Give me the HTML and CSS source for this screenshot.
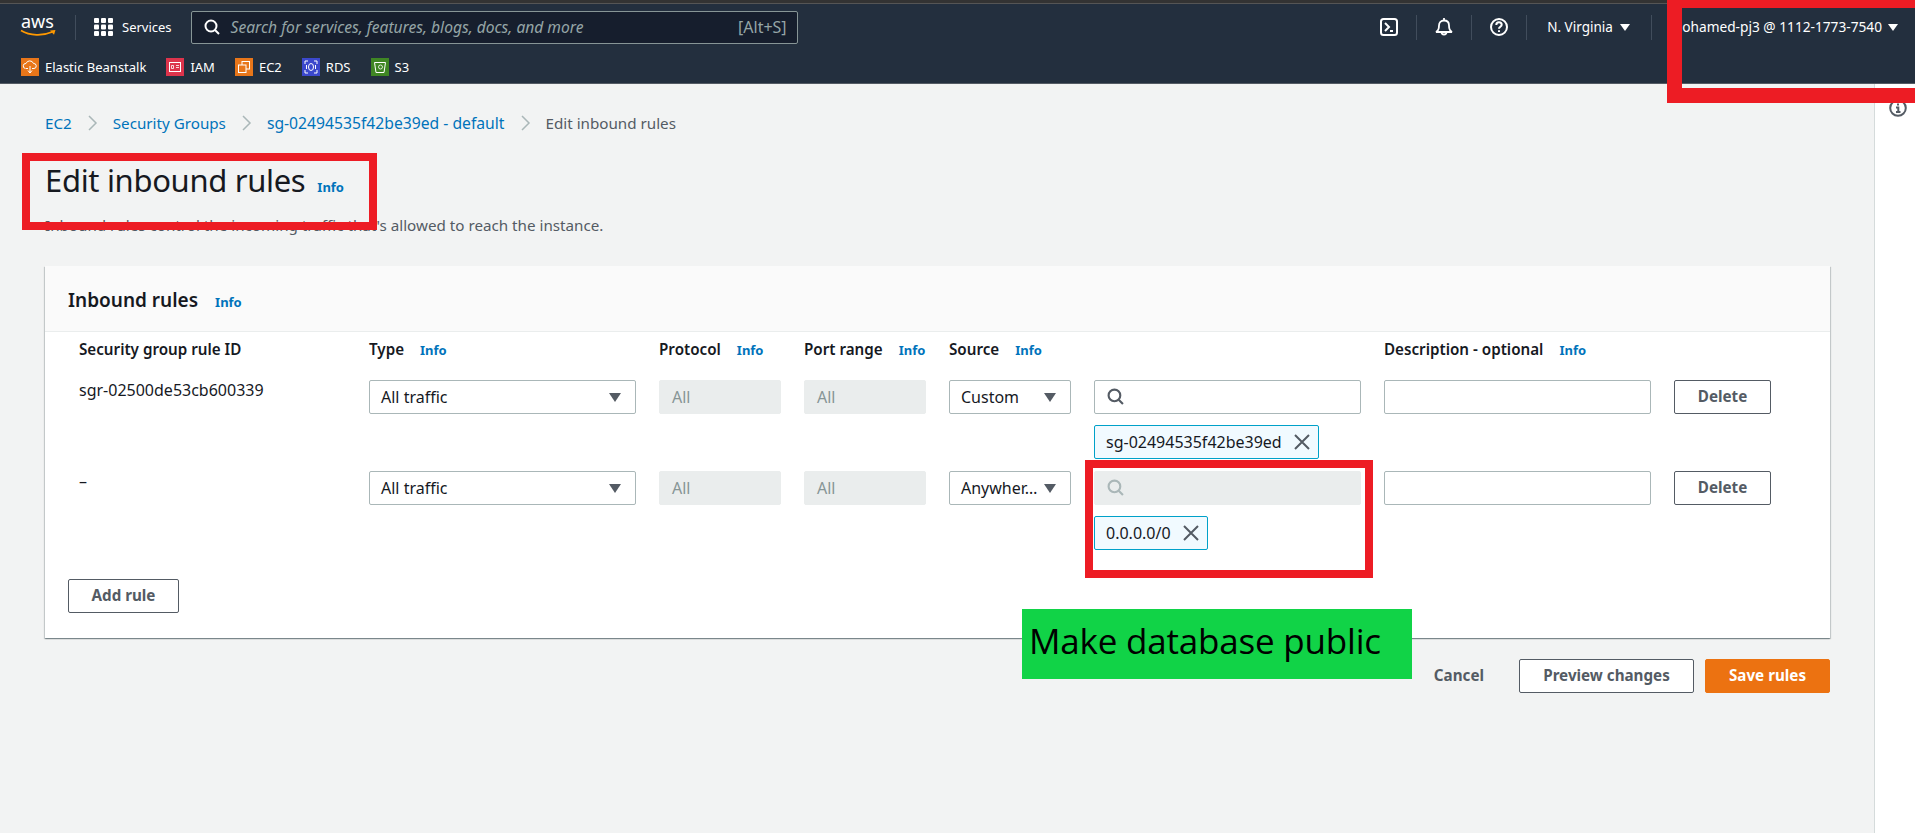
FILE: index.html
```html
<!DOCTYPE html>
<html lang="en">
<head>
	<meta charset="UTF-8">
	<title>Edit inbound rules</title>
	<link rel="stylesheet" href="styles.css">
</head>
<body>
	<div class="strip"></div>
	<header class="nav">
		<div class="nav-top">
			<svg class="aws" viewBox="0 0 36 22"><text x="0" y="11.500" class="aws-txt">aws</text><path d="M0 14.500c9 5.500 22 5.500 31 1.500" fill="none" stroke="#f90" stroke-width="1.800"/><path d="M29 14.500l5.500-.5-1.500 4.800z" fill="#f90"/></svg>
			<span class="sep"></span>
			<svg class="grid-ico" viewBox="0 0 19 18" fill="#fff"><rect x="0" width="5" height="5" rx="1"/><rect x="7" width="5" height="5" rx="1"/><rect x="14" width="5" height="5" rx="1"/><rect x="0" y="6.500" width="5" height="5" rx="1"/><rect x="7" y="6.500" width="5" height="5" rx="1"/><rect x="14" y="6.500" width="5" height="5" rx="1"/><rect x="0" y="13" width="5" height="5" rx="1"/><rect x="7" y="13" width="5" height="5" rx="1"/><rect x="14" y="13" width="5" height="5" rx="1"/></svg>
			<span class="services">Services</span>
			<div class="search">
				<svg class="search-ico" viewBox="0 0 16 16" fill="none" stroke="#fff" stroke-width="2"><circle cx="7" cy="7" r="5.500"/><path d="M11 11l4 4"/></svg>
				<span class="search-ph">Search for services, features, blogs, docs, and more</span>
				<span class="search-key">[Alt+S]</span>
			</div>
			<div class="nav-right">
				<svg class="nav-ico" viewBox="0 0 18 18" fill="none" stroke="#fff" stroke-width="2"><rect x="1" y="1" width="16" height="16" rx="2.500"/><path d="M5 5l4 4-4 4M10 13h3"/></svg>
				<span class="sep"></span>
				<svg class="nav-ico" viewBox="0 0 18 18" fill="none" stroke="#fff" stroke-width="1.800"><path d="M1 14c2-1 3-2.500 3-6.500C4 4.500 6 2.500 9 2.500s5 2 5 5c0 4 1 5.500 3 6.500z"/><path d="M9 0v2.500"/><path d="M6.500 14a2.500 2.500 0 0 0 5 0"/></svg>
				<span class="sep"></span>
				<svg class="nav-ico" viewBox="0 0 18 18" fill="none" stroke="#fff" stroke-width="2"><circle cx="9" cy="9" r="8"/><path d="M6.300 7c0-1.700 1.200-2.700 2.700-2.700s2.700 1 2.700 2.500c0 2-2.700 2-2.700 4"/><path d="M9 12.300v1.700"/></svg>
				<span class="sep"></span>
				<span class="region">N. Virginia</span><span class="caret"></span>
				<span class="sep sep-account"></span>
				<span class="account">Mohamed-pj3 @ 1112-1773-7540</span><span class="caret caret-account"></span>
			</div>
		</div>
		<div class="favs">
			<span class="fav"><svg class="fav-ico" viewBox="0 0 18 18"><rect width="18" height="18" fill="#e8761a"/><path d="M4.500 10.500a2.500 2.500 0 0 1 .5-5 4 4 0 0 1 7.500 0 2.500 2.500 0 0 1 .5 5H11M7 10.500H5M9 8v7M7 12.500l2 2.500 2-2.500" fill="none" stroke="#fff"/></svg>Elastic Beanstalk</span>
			<span class="fav"><svg class="fav-ico" viewBox="0 0 18 18"><rect width="18" height="18" fill="#dd344c"/><rect x="3.500" y="4.500" width="11" height="9" fill="none" stroke="#fff"/><path d="M5.500 7.500h2v3h-2zM10 7.500h3M10 9.500h3" fill="none" stroke="#fff" stroke-width=".8"/></svg>IAM</span>
			<span class="fav"><svg class="fav-ico" viewBox="0 0 18 18"><rect width="18" height="18" fill="#e8761a"/><rect x="7" y="3.500" width="7.500" height="7.500" fill="none" stroke="#fff"/><rect x="3.500" y="7" width="7.500" height="7.500" fill="#e8761a" stroke="#fff"/></svg>EC2</span>
			<span class="fav"><svg class="fav-ico" viewBox="0 0 18 18"><rect width="18" height="18" fill="#3b48cc"/><path d="M3 6V3h3M12 3h3v3M15 12v3h-3M6 15H3v-3" fill="none" stroke="#fff"/><ellipse cx="9" cy="9" rx="2.500" ry="3.500" fill="none" stroke="#fff"/><path d="M4.500 7v4M13.500 7v4" stroke="#fff"/></svg>RDS</span>
			<span class="fav"><svg class="fav-ico" viewBox="0 0 18 18"><rect width="18" height="18" fill="#3f8624"/><path d="M3.500 4.500h11l-1.500 10h-8z" fill="none" stroke="#fff"/><circle cx="9.500" cy="9" r="2" fill="none" stroke="#fff" stroke-width=".8"/></svg>S3</span>
		</div>
	</header>

	<div class="page">
		<main class="main">
			<nav class="crumbs">
				<a>EC2</a><svg class="chev" viewBox="0 0 11 16"><path d="M2 1l7 7-7 7"/></svg>
				<a>Security Groups</a><svg class="chev" viewBox="0 0 11 16"><path d="M2 1l7 7-7 7"/></svg>
				<a class="crumb-id">sg-02494535f42be39ed - default</a><svg class="chev" viewBox="0 0 11 16"><path d="M2 1l7 7-7 7"/></svg>
				<span>Edit inbound rules</span>
			</nav>
			<div class="title-row"><h1>Edit inbound rules</h1><a class="info">Info</a></div>
			<p class="lead">Inbound rules control the incoming traffic that's allowed to reach the instance.</p>

			<section class="card">
				<div class="card-head"><h2>Inbound rules</h2><a class="info">Info</a></div>
				<div class="card-body">
					<div class="rules rules-head">
						<div class="th">Security group rule ID</div>
						<div class="th">Type<a class="info">Info</a></div>
						<div class="th">Protocol<a class="info">Info</a></div>
						<div class="th">Port range<a class="info">Info</a></div>
						<div class="th">Source<a class="info">Info</a></div>
						<div class="th"></div>
						<div class="th">Description - optional<a class="info">Info</a></div>
						<div class="th"></div>
					</div>
					<div class="rules rule">
						<div class="rule-id">sgr-02500de53cb600339</div>
						<div class="select"><span>All traffic</span><i class="tri"></i></div>
						<div class="input off">All</div>
						<div class="input off">All</div>
						<div class="select"><span>Custom</span><i class="tri"></i></div>
						<div class="src">
							<div class="input"><svg class="s-ico" viewBox="0 0 16 16" fill="none" stroke="#545b64" stroke-width="2"><circle cx="7" cy="7" r="5.500"/><path d="M11 11l4 4"/></svg></div>
							<div class="tag">sg-02494535f42be39ed<svg class="x" viewBox="0 0 16 16"><path d="M1 1l14 14M15 1L1 15"/></svg></div>
						</div>
						<div class="input"></div>
						<button class="btn">Delete</button>
					</div>
					<div class="rules rule rule-2">
						<div class="rule-id">–</div>
						<div class="select"><span>All traffic</span><i class="tri"></i></div>
						<div class="input off">All</div>
						<div class="input off">All</div>
						<div class="select"><span>Anywher…</span><i class="tri"></i></div>
						<div class="src">
							<div class="input off"><svg class="s-ico" viewBox="0 0 16 16" fill="none" stroke="#aab7b8" stroke-width="2"><circle cx="7" cy="7" r="5.500"/><path d="M11 11l4 4"/></svg></div>
							<div class="tag">0.0.0.0/0<svg class="x" viewBox="0 0 16 16"><path d="M1 1l14 14M15 1L1 15"/></svg></div>
						</div>
						<div class="input"></div>
						<button class="btn">Delete</button>
					</div>
					<button class="btn btn-add">Add rule</button>
				</div>
			</section>

			<div class="actions">
				<a class="cancel">Cancel</a>
				<button class="btn btn-preview">Preview changes</button>
				<button class="btn btn-save">Save rules</button>
			</div>
		</main>
		<aside class="side">
			<svg class="side-ico" viewBox="0 0 18 18" fill="none" stroke="#545b64" stroke-width="2"><circle cx="9" cy="9" r="7.800"/><path d="M9 4.500v2M7 8.500h2.300v4.500M7 13h4.500"/></svg>
		</aside>
	</div>

	<div class="mark mark-title"></div>
	<div class="mark mark-account"></div>
	<div class="mark mark-source"></div>
	<div class="note">Make database public</div>
</body>
</html>
```

FILE: styles.css
```css
* {margin: 0;padding: 0;box-sizing: border-box;}
html, body {height: 100%;overflow: hidden;}
body {position: relative;display: flex;flex-direction: column;background: #f2f3f3;color: #16191f;font: 15.2px/20px "Noto Sans", "Open Sans", sans-serif;}
a {color: #0073bb;}

.strip {height: 4px;flex: none;background: #333;border-bottom: 1px solid #555;}
.nav {flex: none;height: 80px;background: #232f3e;color: #fff;border-bottom: 1px solid #545b64;}
.nav-top {display: flex;align-items: center;height: 46px;padding: 0 17px 0 21px;}
.aws {width: 36px;height: 22px;flex: none;overflow: visible;}
.aws-txt {font: 18px "Noto Sans", sans-serif;fill: #fff;}
.sep {width: 1px;height: 25px;flex: none;background: #414d5c;margin: 0 18px;}
.grid-ico {width: 19px;height: 18px;flex: none;}
.services {margin: 0 19px 0 9px;font-size: 13px;}
.search {display: flex;align-items: center;width: 607px;height: 33px;padding: 0 10px 0 12px;background: #161e2d;border: 1px solid #879596;border-radius: 2px;}
.search-ico {width: 16px;height: 16px;flex: none;}
.search-ph {flex: 1;margin-left: 11px;font-size: 15.600px;font-style: italic;color: #95a5a6;}
.search-key {font-size: 16px;color: #95a5a6;}
.nav-right {display: flex;align-items: center;margin-left: auto;font-size: 13.500px;}
.nav-ico {width: 18px;height: 18px;flex: none;}
.region {margin-left: 2px;}
.caret {width: 0;height: 0;flex: none;margin-left: 7px;border: 5px solid transparent;border-top: 7px solid #fff;border-bottom: 0;}
.caret-account {margin-left: 6px;}
.sep-account {margin: 0 18px 0 21px;}
.account {font-size: 13.700px;white-space: nowrap;}

.favs {display: flex;align-items: center;gap: 20px;padding: 7px 0 0 21px;font-size: 13px;}
.fav {display: flex;align-items: center;gap: 6px;}
.fav-ico {width: 18px;height: 18px;flex: none;}

.page {flex: 1;display: flex;min-height: 0;}
.main {flex: 1;padding: 29px 44px 0 45px;}
.side {width: 41px;flex: none;background: #fff;border-left: 1px solid #d5dbdb;padding: 15px 0 0 14px;}
.side-ico {display: block;width: 18px;height: 18px;}

.crumbs {display: flex;align-items: center;height: 20px;color: #545b64;}
.crumb-id {font-size: 15.700px;}
.chev {width: 11px;height: 16px;margin: 0 15px;fill: none;stroke: #aab7b8;stroke-width: 1.500;}
.title-row {display: flex;align-items: baseline;gap: 12px;margin-top: 25px;}
h1 {font-size: 31px;line-height: 44px;font-weight: 400;letter-spacing: -.33px;}
.info {font-size: 13px;font-weight: 700;}
.lead {margin-top: 13px;color: #545b64;}

.card {margin-top: 31px;background: #fff;box-shadow: 0 1px 1px 0 rgba(0,28,36,.3), 1px 1px 1px 0 rgba(0,28,36,.15), -1px 1px 1px 0 rgba(0,28,36,.15);}
.card-head {display: flex;align-items: baseline;gap: 17px;height: 66px;padding: 21px 23px 0;background: #fafafa;border-bottom: 1px solid #eaeded;}
h2 {font-size: 19px;line-height: 26px;font-weight: 600;}
.card-body {padding: 7px 23px 25px;}
.rules {display: grid;grid-template-columns: 267px 267px 122px 122px 122px 267px 267px 97px;column-gap: 23px;padding-left: 11px;padding-right: 36px;}
.rules-head {height: 41px;align-items: start;}
.th {display: flex;align-items: baseline;gap: 16px;font-weight: 600;}
.rule {height: 91px;align-items: start;font-size: 16px;}
.rule-2 {height: 108px;}
.select, .input {display: flex;align-items: center;height: 34px;padding: 0 12px 1px;background: #fff;border: 1px solid #aab7b8;border-radius: 2px;}
.select {justify-content: space-between;padding: 0 14px 1px 11px;}
.select span {white-space: nowrap;}
.tri {flex: none;width: 0;height: 0;margin-top: 1px;border: 6.500px solid transparent;border-top: 9px solid #545b64;border-bottom: 0;}
.input.off {background: #eaeded;border-color: #eaeded;color: #879596;}
.src {display: flex;flex-direction: column;align-items: flex-start;gap: 11px;}
.src .input {width: 100%;}
.s-ico {width: 17px;height: 17px;}
.tag {display: flex;align-items: center;gap: 12px;height: 34px;padding: 0 8px 0 11px;background: #f1faff;border: 1px solid #00a1c9;border-radius: 2px;}
.x {width: 16px;height: 16px;fill: none;stroke: #545b64;stroke-width: 2;}
.btn {height: 34px;padding-bottom: 2px;background: #fff;border: 1px solid #545b64;border-radius: 2px;color: #545b64;font: 700 15.200px/20px "Noto Sans", "Open Sans", sans-serif;}
.btn-add {display: block;width: 111px;}

.actions {display: flex;align-items: center;justify-content: flex-end;margin-top: 21px;}
.cancel {padding-bottom: 2px;color: #545b64;font-weight: 700;margin-right: 35px;}
.btn-preview {width: 175px;margin-right: 11px;}
.btn-save {width: 125px;background: #ec7211;border-color: #ec7211;color: #fff;}

/* annotations painted over the screenshot */
.mark {position: absolute;border: 8px solid #ed1c24;}
.mark-title {left: 22px;top: 153px;width: 355px;height: 77px;}
.mark-account {left: 1667px;top: -10px;width: 280px;height: 113px;border-width: 18px 15px 15px;}
.mark-source {left: 1085px;top: 460px;width: 288px;height: 118px;}
.note {position: absolute;left: 1022px;top: 609px;width: 390px;height: 70px;padding: 7px 7px;background: #11d347;color: #000;font: 35px/50px "Open Sans", sans-serif;letter-spacing: -.2px;}
```
